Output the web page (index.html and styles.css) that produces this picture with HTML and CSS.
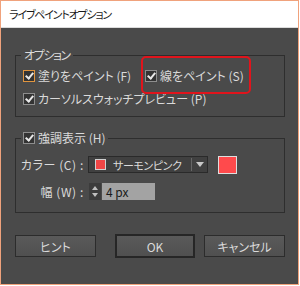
FILE: index.html
```html
<!DOCTYPE html>
<html lang="ja">
<head>
    <meta charset="UTF-8">
    <title>ライブペイントオプション</title>
    <link rel="stylesheet" href="styles.css">
</head>
<body>

    <div class="window">
        <div class="titlebar">ライブペイントオプション</div>

        <div class="content">
            <fieldset class="group">
                <legend class="group-title">オプション</legend>
                <div class="row">
                    <label class="check check-first"><span class="box focused"></span>塗りをペイント (F)</label>
                    <label class="check marked"><span class="box"></span>線をペイント (S)</label>
                </div>
                <div class="row">
                    <label class="check"><span class="box"></span>カーソルスウォッチプレビュー (P)</label>
                </div>
            </fieldset>

            <fieldset class="group group-highlight">
                <legend class="group-title"><label class="check"><span class="box"></span>強調表示 (H)</label></legend>
                <div class="field">
                    <span class="field-label">カラー (C) :</span>
                    <div class="select">
                        <span class="chip"></span>
                        <span class="select-text">サーモンピンク</span>
                        <span class="select-arrow">
                            <svg width="8" height="6" viewBox="0 0 8 6"><path d="M0 0 L8 0 L4 5 Z" fill="#c8c8c8"/></svg>
                        </span>
                    </div>
                    <span class="swatch"></span>
                </div>
                <div class="field">
                    <span class="field-label">幅 (W) :</span>
                    <span class="spinner">
                        <svg width="12" height="17" viewBox="0 0 12 17">
                            <path d="M3 7 L9 7 L6 3 Z" fill="#c0c0c0"/>
                            <path d="M3 10 L9 10 L6 14 Z" fill="#c0c0c0"/>
                        </svg>
                    </span>
                    <span class="number">4 px</span>
                </div>
            </fieldset>

            <div class="buttons">
                <button class="btn">ヒント</button>
                <button class="btn btn-default">OK</button>
                <button class="btn">キャンセル</button>
            </div>
        </div>
    </div>

</body>
</html>
```

FILE: styles.css
```css
body {
    margin: 0;
    padding: 0;
    background-color: #fff;
    font-family: "Noto Sans CJK JP", "Noto Sans", sans-serif;
    font-size: 12px;
    font-feature-settings: "palt";
}
.window {
    width: 297px;
    height: 283px;
    border: 1px solid #f0a27c;
    background-color: #4a4a4a;
    color: #dadada;
}
.titlebar {
    height: 26px;
    background-color: #fff;
    border-bottom: 1px solid #dcdcdc;
    color: #1a1a1a;
    padding-left: 8px;
    font-size: 11px;
    letter-spacing: -1.2px;
    display: flex;
    align-items: center;
}
.content {
    padding: 19px 13px 0 14px;
}
.group {
    margin: 0;
    padding: 1px 0 6px 0;
    border: 1px solid #2e2e2e;
    min-width: 0;
}
.group-title {
    margin-left: 5px;
    padding: 0 3px;
    height: 16px;
    line-height: 16px;
    font-size: 12px;
    letter-spacing: -1.4px;
}
.row {
    height: 23px;
    padding-left: 7px;
    display: flex;
    align-items: center;
}
.check {
    display: flex;
    align-items: center;
    gap: 3px;
    white-space: nowrap;
}
.check-first {
    width: 122px;
}
.box {
    width: 10px;
    height: 10px;
    border: 1px solid #8e8e8e;
    background-color: #333;
    position: relative;
}
.box::after {
    content: "";
    position: absolute;
    left: 3px;
    top: 0px;
    width: 3px;
    height: 6px;
    border-right: 2px solid #e8e8e8;
    border-bottom: 2px solid #e8e8e8;
    transform: rotate(40deg);
}
.box.focused {
    border-color: #e0953f;
}
.marked {
    position: relative;
}
.marked::before {
    content: "";
    position: absolute;
    left: -4px;
    right: -7px;
    top: -11px;
    bottom: -10px;
    border: 2px solid #e0141c;
    border-radius: 5px;
}
.group-highlight {
    margin-top: 13px;
    padding: 6px 0 8px 0;
}
.group-highlight .group-title {
    margin-left: 5px;
    padding: 0 2px;
    letter-spacing: 0;
}
.field {
    height: 25px;
    display: flex;
    align-items: center;
}
.field + .field {
    margin-top: 2px;
}
.field-label {
    width: 68px;
    text-align: right;
    margin-right: 4px;
    white-space: nowrap;
    letter-spacing: 0.6px;
}
.select {
    width: 118px;
    height: 15px;
    border: 1px solid #2a2a2a;
    background-color: #404040;
    display: flex;
    align-items: center;
}
.chip {
    width: 9px;
    height: 9px;
    margin-left: 6px;
    background-color: #f04545;
    border: 1px solid #d0d0d0;
}
.select-text {
    margin-left: 7px;
    flex: 1;
    font-size: 11px;
    letter-spacing: -0.4px;
    white-space: nowrap;
    overflow: hidden;
}
.select-arrow {
    width: 15px;
    height: 13px;
    border-left: 1px solid #666;
    display: flex;
    align-items: center;
    justify-content: center;
}
.swatch {
    width: 17px;
    height: 16px;
    margin-left: 10px;
    background-color: #ff4a4c;
    border: 1px solid #dedede;
}
.spinner {
    width: 12px;
    height: 17px;
    margin-left: 1px;
    background-color: #3c3c3c;
    display: flex;
}
.number {
    width: 49px;
    height: 17px;
    line-height: 17px;
    margin-left: 1px;
    padding-left: 4px;
    background-color: #a3a3a3;
    color: #1a1a1a;
}
.buttons {
    margin-top: 21px;
    display: flex;
    align-items: center;
}
.btn {
    width: 81px;
    height: 22px;
    padding: 0;
    border: 1px solid #2c2c2c;
    background: linear-gradient(#5a5a5a, #505050);
    color: #dadada;
    font-family: "Noto Sans CJK JP", "Noto Sans", sans-serif;
    font-size: 12px;
    font-feature-settings: "palt";
}
.btn-default {
    width: 80px;
    height: 24px;
    margin-left: 19px;
    margin-right: 9px;
    border: 2px solid #262626;
}
```
